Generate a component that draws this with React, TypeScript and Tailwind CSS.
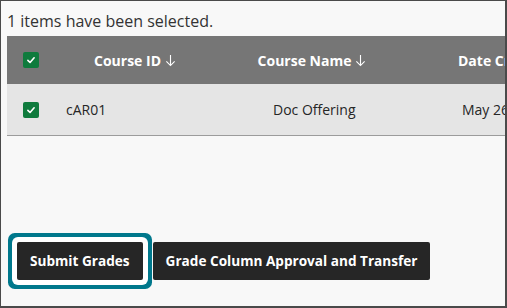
import React from "react";

function Check() {
  return (
    <span className="flex h-4 w-4 items-center justify-center rounded-[2px] bg-[#0f7b3d]">
      <svg viewBox="0 0 16 16" className="h-[10px] w-[10px]" fill="none">
        <path d="M3 8.5 L6.5 12 L13 4.5" stroke="white" strokeWidth="2.6" strokeLinecap="round" strokeLinejoin="round" />
      </svg>
    </span>
  );
}

function SortArrow() {
  return (
    <svg viewBox="0 0 12 14" className="ml-[4px] inline-block h-[13px] w-[11px] align-[-1px]" fill="none">
      <path d="M6 1 V12.5 M1.5 8 L6 12.5 L10.5 8" stroke="white" strokeWidth="1.2" />
    </svg>
  );
}

export default function App() {
  return (
    <div
      className="h-[308px] w-[507px] overflow-hidden border-t border-l border-r-2 border-b-2 border-[#4a4a4a] bg-[#f8f8f8] text-[#262626]"
      style={{ fontFamily: '"Open Sans", "Noto Sans", sans-serif' }}
    >
      <p className="pl-[6px] pt-[9px] text-[16px] leading-[22px] text-[#333]">1 items have been selected.</p>

      <div className="ml-[6px] mt-[4px] w-[650px]">
        <div className="flex h-[48px] items-center bg-[#767676] text-[14px] font-bold text-white">
          <div className="flex w-[48px] justify-center">
            <Check />
          </div>
          <div className="w-[160px] text-center">
            Course ID
            <SortArrow />
          </div>
          <div className="w-[194px] text-center">
            Course Name
            <SortArrow />
          </div>
          <div className="pl-[49px]">Date Created</div>
        </div>

        <div className="flex h-[52px] items-center border-b-[1.5px] border-[#9c9c9c] bg-[#e5e5e5] text-[14px]">
          <div className="flex w-[48px] justify-center">
            <Check />
          </div>
          <div className="w-[160px] pl-[11px]">cAR01</div>
          <div className="w-[194px] pl-[58px]">Doc Offering</div>
          <div className="pl-[53px]">May 26, 2021</div>
        </div>
      </div>

      <div className="mt-[106px] flex pl-[16px]">
        <button className="h-[38px] rounded-[2px] bg-[#262626] px-[13px] text-[13.6px] font-bold text-white shadow-[0_0_0_5px_#ffffff,0_0_0_9px_#00788c]">
          Submit Grades
        </button>
        <button className="ml-[10px] h-[38px] rounded-[2px] bg-[#262626] px-[13px] text-[13.6px] font-bold text-white">
          Grade Column Approval and Transfer
        </button>
      </div>
    </div>
  );
}
